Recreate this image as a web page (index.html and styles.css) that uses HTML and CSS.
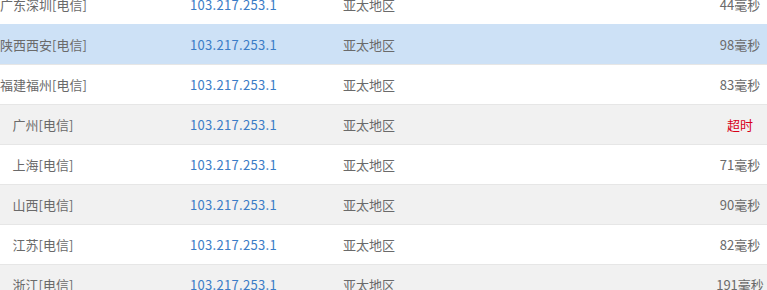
FILE: index.html
```html
<!DOCTYPE html>
<html lang="zh-CN">
<head>
<meta charset="utf-8">
<link rel="stylesheet" href="styles.css">
</head>
<body>
<div class="table">
  <div class="row"><span class="node">广东深圳[电信]</span><span class="ip">103.217.253.1</span><span class="area">亚太地区</span><span class="ms">44毫秒</span></div>
  <div class="row selected"><span class="node">陕西西安[电信]</span><span class="ip">103.217.253.1</span><span class="area">亚太地区</span><span class="ms">98毫秒</span></div>
  <div class="row"><span class="node">福建福州[电信]</span><span class="ip">103.217.253.1</span><span class="area">亚太地区</span><span class="ms">83毫秒</span></div>
  <div class="row alt"><span class="node">广州[电信]</span><span class="ip">103.217.253.1</span><span class="area">亚太地区</span><span class="ms timeout">超时</span></div>
  <div class="row"><span class="node">上海[电信]</span><span class="ip">103.217.253.1</span><span class="area">亚太地区</span><span class="ms">71毫秒</span></div>
  <div class="row alt"><span class="node">山西[电信]</span><span class="ip">103.217.253.1</span><span class="area">亚太地区</span><span class="ms">90毫秒</span></div>
  <div class="row"><span class="node">江苏[电信]</span><span class="ip">103.217.253.1</span><span class="area">亚太地区</span><span class="ms">82毫秒</span></div>
  <div class="row alt"><span class="node">浙江[电信]</span><span class="ip">103.217.253.1</span><span class="area">亚太地区</span><span class="ms">191毫秒</span></div>
</div>
</body>
</html>
```
FILE: styles.css
```css
html, body {
  margin: 0;
  padding: 0;
  background: #ffffff;
  overflow: hidden;
}
body {
  font-family: "Noto Sans CJK SC", "Noto Sans", sans-serif;
  font-size: 13px;
  color: #6a6a6a;
}
.table {
  margin-top: -16px;
}
.row {
  display: grid;
  grid-template-columns: 86px 257px 1fr 54px;
  align-items: center;
  height: 39px;
  border-top: 1px solid #e6e6e6;
  background: #ffffff;
  white-space: nowrap;
}
.row.alt {
  background: #f1f1f1;
}
.row.selected {
  background: #cde1f6;
  border-top-color: #cde1f6;
}
.node {
  text-align: center;
}
.ip {
  padding-left: 104px;
  color: #3a7cc6;
  letter-spacing: 0.3px;
}
.area {
  padding-left: 0;
}
.ms {
  text-align: center;
}
.timeout {
  color: #d8001a;
}
```
